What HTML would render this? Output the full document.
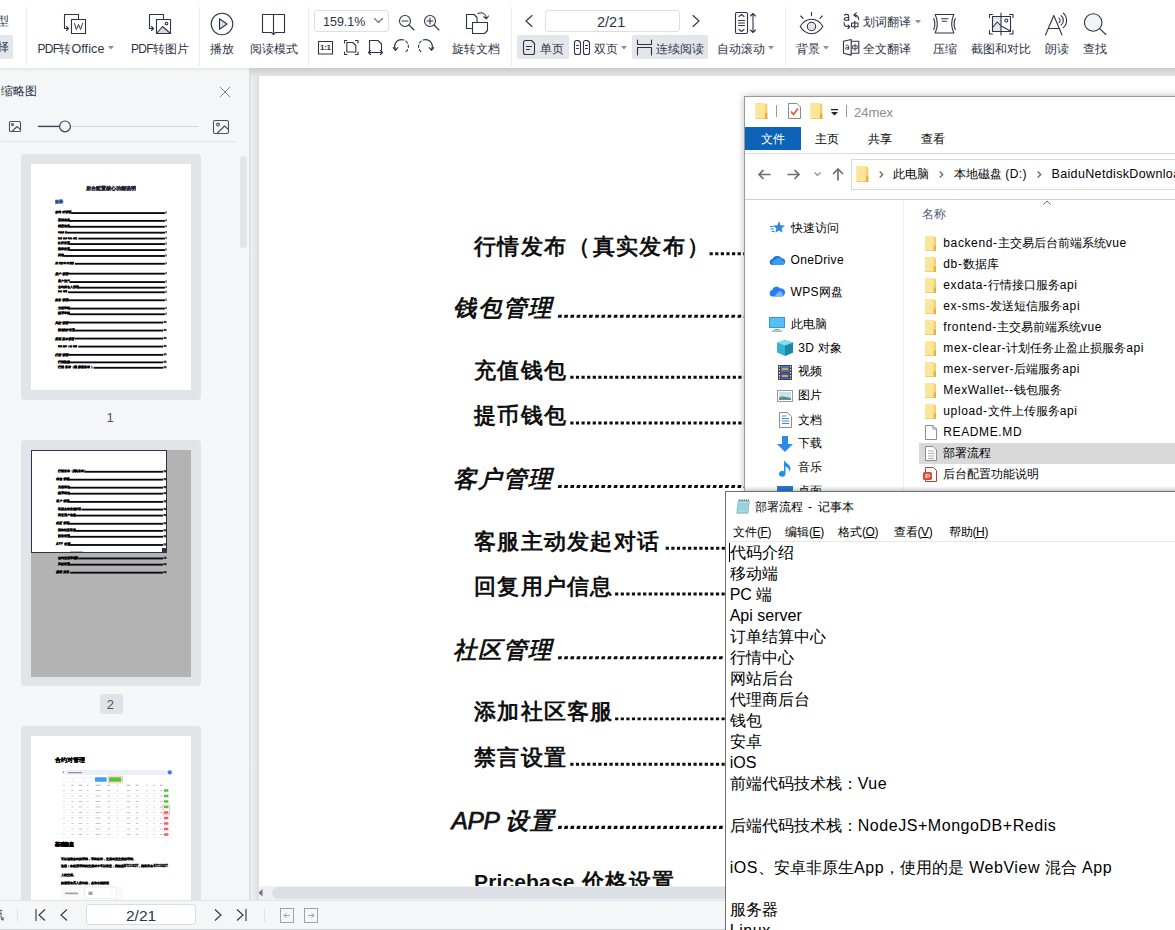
<!DOCTYPE html>
<html lang="zh">
<head>
<meta charset="utf-8">
<title>PDF</title>
<style>
*{box-sizing:border-box;margin:0;padding:0}
html,body{width:1175px;height:930px;overflow:hidden;background:#fff}
body{font-family:"Liberation Sans",sans-serif;color:#2d3446;position:relative}
.a{position:absolute}
.t{position:absolute;white-space:nowrap;line-height:1}
svg{position:absolute;overflow:visible}
#tb{left:0;top:0;width:1175px;height:68px;background:#fff}
#tbsh{left:0;top:68px;width:249px;height:4px;background:linear-gradient(#e4e6e9,#f5f6f8)}
#tbsh2{left:249px;top:68px;width:926px;height:8px;background:linear-gradient(#c9cbce,#e5e6e9)}
.lbl{font-size:12px;color:#2d3446}
.sep{position:absolute;width:1px;background:#ebecef;top:7px;height:59px}
.hl{position:absolute;background:#e3e6ea;border-radius:2px}
.ic{stroke:#2d3446;fill:none;stroke-width:1.1;stroke-linecap:round;stroke-linejoin:round}
#sb{left:0;top:68px;width:249px;height:832px;background:#f5f6f8}
#split{left:249px;top:76px;width:10px;height:824px;background:linear-gradient(90deg,#e0e2e6 0,#e0e2e6 20%,#eff0f3 21%,#e6e7ea 60%,#dbdcdf 100%)}
.card{position:absolute;left:21px;width:180px;background:#e1e4e9;border-radius:4px}
.pg{position:absolute;background:#fff}
.ln{position:absolute;height:1.6px;background:#15151f}
#doc{left:259px;top:76px;width:520px;height:811px;background:#fff}
.h1{font-size:23.5px;font-weight:bold;font-style:italic;color:#111;letter-spacing:2px}
.h1 b{font-size:24.5px;letter-spacing:-.3px;font-weight:normal;-webkit-text-stroke:.75px #111;margin-left:-1.5px;margin-right:-3.5px}
.h2 b{font-size:21px;letter-spacing:.15px}
.h2 u{text-decoration:none;margin:0 1.2px}
.h2{font-size:22.3px;font-weight:bold;color:#111;letter-spacing:1.3px}
.dots{position:absolute;height:3px}
#st{left:0;top:900px;width:1175px;height:30px;background:#f5f6f8;border-top:1px solid #e1e3e7}
#ex{left:744px;top:96px;width:440px;height:396px;background:#fff;border-left:1px solid #9a9a9a;border-top:1px solid #9a9a9a}
.ex{font-size:12px;color:#000}
.ex i,.np i{font-style:normal;letter-spacing:.35px}
#np{left:725px;top:491px;width:460px;height:450px;background:#fff;border-left:1px solid #6f6f6f;border-top:1px solid #6f6f6f}
.ex.f i{letter-spacing:.62px}
.np{font-size:16px;color:#000}
.np i{letter-spacing:0}
.np.w i{letter-spacing:.55px}
.u{text-decoration:underline}
</style>
</head>
<body>
<div id="doc" class="a"></div>
<div class="t h2" style="left:474px;top:236px;">行情发布<u>（</u>真实发布<u>）</u></div>
<div class="t h1" style="left:453px;top:297.4px;">钱包管理</div>
<div class="t h2" style="left:474px;top:359.6px;">充值钱包</div>
<div class="t h2" style="left:474px;top:405.4px;">提币钱包</div>
<div class="t h1" style="left:453px;top:467.8px;">客户管理</div>
<div class="t h2" style="left:474px;top:530.6px;">客服主动发起对话</div>
<div class="t h2" style="left:474px;top:576.4px;">回复用户信息</div>
<div class="t h1" style="left:453px;top:639px;">社区管理</div>
<div class="t h2" style="left:474px;top:701.2px;">添加社区客服</div>
<div class="t h2" style="left:474px;top:746.6px;">禁言设置</div>
<div class="t h1" style="left:453px;top:808.6px;"><b>APP</b> 设置</div>
<div class="t h2" style="left:474px;top:871.4px;"><b>Pricebase</b> 价格设置</div>
<svg style="left:0;top:0" width="760" height="900" viewBox="0 0 760 900"><path d="M709.6 253.7H760" stroke="#0c0c0c" stroke-width="2.9" stroke-dasharray="3.2 2.4" fill="none"/><path d="M558.1 316.2H760" stroke="#0c0c0c" stroke-width="3.1" stroke-dasharray="3.6 2.59" fill="none" transform="translate(67.2 0) skewX(-12)"/><path d="M570.3 377.2H760" stroke="#0c0c0c" stroke-width="2.9" stroke-dasharray="3.2 2.4" fill="none"/><path d="M570.3 423H760" stroke="#0c0c0c" stroke-width="2.9" stroke-dasharray="3.2 2.4" fill="none"/><path d="M558.1 486.5H760" stroke="#0c0c0c" stroke-width="3.1" stroke-dasharray="3.6 2.59" fill="none" transform="translate(103.4 0) skewX(-12)"/><path d="M665.7 548.2H760" stroke="#0c0c0c" stroke-width="2.9" stroke-dasharray="3.2 2.4" fill="none"/><path d="M615.1 594H760" stroke="#0c0c0c" stroke-width="2.9" stroke-dasharray="3.2 2.4" fill="none"/><path d="M558.1 657.7H760" stroke="#0c0c0c" stroke-width="3.1" stroke-dasharray="3.6 2.59" fill="none" transform="translate(139.8 0) skewX(-12)"/><path d="M615.1 718.9H760" stroke="#0c0c0c" stroke-width="2.9" stroke-dasharray="3.2 2.4" fill="none"/><path d="M570.3 764.2H760" stroke="#0c0c0c" stroke-width="2.9" stroke-dasharray="3.2 2.4" fill="none"/><path d="M558.1 827.4H760" stroke="#0c0c0c" stroke-width="3.1" stroke-dasharray="3.6 2.59" fill="none" transform="translate(175.9 0) skewX(-12)"/></svg>
<div class="a" style="left:249px;top:886px;width:930px;height:14px;background:#eef0f3"></div>
<div class="a" style="left:272px;top:887px;width:700px;height:12px;border-radius:6px;background:#dcdfe6"></div>
<svg style="left:258px;top:889px" width="5" height="8"><path d="M4.5 0v7.5L.5 3.75z" fill="#6b7385"/></svg>
<div id="sb" class="a"></div>
<div id="split" class="a"></div>
<div class="t lbl" style="left:1px;top:85px;font-size:12px">缩略图</div>
<svg style="left:220px;top:87px" width="10" height="10"><path d="M0 0l10 10M10 0L0 10" stroke="#7c8393" stroke-width="1" fill="none"/></svg>
<svg class="ic" style="left:9px;top:121px" width="12" height="11" viewBox="0 0 12 11"><rect x=".5" y=".5" width="11" height="10" rx="1" stroke="#4a5268"/><circle cx="3.5" cy="3.5" r="1" stroke="#4a5268"/><path d="M3 10.5l5-5 3.5 3" stroke="#4a5268"/></svg>
<div class="a" style="left:38px;top:126px;width:160px;height:1px;background:#d3d6dc"></div>
<svg style="left:0;top:118px" width="80" height="18"><path d="M38 8.4H59" stroke="#3a425a" stroke-width="1.4"/><circle cx="65" cy="8.4" r="5.4" fill="#f5f6f8" stroke="#3a425a" stroke-width="1.2"/></svg>
<svg class="ic" style="left:213px;top:120px" width="16" height="14" viewBox="0 0 16 14"><rect x=".5" y=".5" width="15" height="13" rx="1.5" stroke="#4a5268"/><circle cx="5" cy="4.5" r="1.4" stroke="#4a5268"/><path d="M4 13.5l7.5-7.5 4 3.5" stroke="#4a5268"/></svg>
<div class="a" style="left:1px;top:141px;width:236px;height:1px;background:#e1e3e8"></div>
<div class="a" style="left:240px;top:156px;width:7px;height:92px;border-radius:4px;background:#e1e4e9"></div>
<div class="card" style="top:154px;height:245.5px"></div>
<div class="pg" style="left:31px;top:164px;width:160px;height:226px"></div>
<div class="card" style="top:440px;height:245.5px"></div>
<div class="pg" style="left:31px;top:450px;width:160px;height:226.5px;background:#b3b3b3"></div>
<div class="a" style="left:30.5px;top:449.5px;width:136.5px;height:103.5px;background:#fff;border:1px solid #2d3446"></div>
<div class="a" style="left:162px;top:548px;width:5px;height:5px;background:#2d3446"></div>
<div class="card" style="top:726px;height:180px"></div>
<div class="pg" style="left:31px;top:736px;width:160px;height:170px"></div>
<svg style="left:0;top:0" width="249" height="900" viewBox="0 0 249 900"><rect x="71.1" y="212.15" width="93.8" height="1.85" fill="#08080f" /><rect x="165.4" y="211.4" width="1.3" height="2.2" fill="#14141e" opacity=".85"/><rect x="69.3" y="219.95" width="95.6" height="1.85" fill="#08080f" /><rect x="165.4" y="219.2" width="1.3" height="2.2" fill="#14141e" opacity=".85"/><rect x="69.3" y="225.85" width="95.6" height="1.85" fill="#08080f" /><rect x="165.4" y="225.1" width="1.3" height="2.2" fill="#14141e" opacity=".85"/><rect x="66.7" y="231.75" width="98.2" height="1.85" fill="#08080f" /><rect x="165.4" y="231" width="1.3" height="2.2" fill="#14141e" opacity=".85"/><rect x="78.3" y="237.65" width="86.6" height="1.85" fill="#08080f" /><rect x="165.4" y="236.9" width="1.3" height="2.2" fill="#14141e" opacity=".85"/><rect x="69.3" y="243.15" width="95.6" height="1.85" fill="#08080f" /><rect x="165.4" y="242.4" width="1.3" height="2.2" fill="#14141e" opacity=".85"/><rect x="69.3" y="249.15" width="95.6" height="1.85" fill="#08080f" /><rect x="165.4" y="248.4" width="1.3" height="2.2" fill="#14141e" opacity=".85"/><rect x="64.1" y="255.05" width="100.8" height="1.85" fill="#08080f" /><rect x="165.4" y="254.3" width="1.3" height="2.2" fill="#14141e" opacity=".85"/><rect x="74.8" y="262.85" width="90.1" height="1.85" fill="#08080f" /><rect x="165.4" y="262.1" width="1.3" height="2.2" fill="#14141e" opacity=".85"/><rect x="68.1" y="272.75" width="96.8" height="1.85" fill="#08080f" /><rect x="165.4" y="272" width="1.3" height="2.2" fill="#14141e" opacity=".85"/><rect x="69.3" y="281.15" width="95.6" height="1.85" fill="#08080f" /><rect x="165.4" y="280.4" width="1.3" height="2.2" fill="#14141e" opacity=".85"/><rect x="78.3" y="286.75" width="86.6" height="1.85" fill="#08080f" /><rect x="165.4" y="286" width="1.3" height="2.2" fill="#14141e" opacity=".85"/><rect x="68.1" y="291.35" width="96.8" height="1.85" fill="#08080f" /><rect x="165.4" y="290.6" width="1.3" height="2.2" fill="#14141e" opacity=".85"/><rect x="68.1" y="299.35" width="96.8" height="1.85" fill="#08080f" /><rect x="165.4" y="298.6" width="1.3" height="2.2" fill="#14141e" opacity=".85"/><rect x="69.3" y="307.65" width="95.6" height="1.85" fill="#08080f" /><rect x="165.4" y="306.9" width="1.3" height="2.2" fill="#14141e" opacity=".85"/><rect x="69.3" y="313.35" width="95.6" height="1.85" fill="#08080f" /><rect x="165.4" y="312.6" width="1.3" height="2.2" fill="#14141e" opacity=".85"/><rect x="68.1" y="321.65" width="94.9" height="1.85" fill="#08080f" /><rect x="163.5" y="320.9" width="3" height="2.2" fill="#14141e" opacity=".85"/><rect x="74.8" y="329.65" width="88.2" height="1.85" fill="#08080f" /><rect x="163.5" y="328.9" width="3" height="2.2" fill="#14141e" opacity=".85"/><rect x="74.8" y="337.65" width="88.2" height="1.85" fill="#08080f" /><rect x="163.5" y="336.9" width="3" height="2.2" fill="#14141e" opacity=".85"/><rect x="78.3" y="345.65" width="84.7" height="1.85" fill="#08080f" /><rect x="163.5" y="344.9" width="3" height="2.2" fill="#14141e" opacity=".85"/><rect x="68.1" y="353.95" width="94.9" height="1.85" fill="#08080f" /><rect x="163.5" y="353.2" width="3" height="2.2" fill="#14141e" opacity=".85"/><rect x="69.3" y="361.45" width="93.7" height="1.85" fill="#08080f" /><rect x="163.5" y="360.7" width="3" height="2.2" fill="#14141e" opacity=".85"/><rect x="93.6" y="366.85" width="69.4" height="1.85" fill="#08080f" /><rect x="163.5" y="366.1" width="3" height="2.2" fill="#14141e" opacity=".85"/><rect x="84.9" y="470.85" width="78.1" height="1.85" fill="#08080f" /><rect x="163.5" y="470.1" width="3" height="2.2" fill="#14141e" opacity=".85"/><rect x="68.2" y="478.75" width="94.8" height="1.85" fill="#08080f" /><rect x="163.5" y="478" width="3" height="2.2" fill="#14141e" opacity=".85"/><rect x="69.5" y="486.75" width="93.5" height="1.85" fill="#08080f" /><rect x="163.5" y="486" width="3" height="2.2" fill="#14141e" opacity=".85"/><rect x="69.5" y="492.75" width="93.5" height="1.85" fill="#08080f" /><rect x="163.5" y="492" width="3" height="2.2" fill="#14141e" opacity=".85"/><rect x="68.2" y="500.95" width="94.8" height="1.85" fill="#08080f" /><rect x="163.5" y="500.2" width="3" height="2.2" fill="#14141e" opacity=".85"/><rect x="81.5" y="508.65" width="81.5" height="1.85" fill="#08080f" /><rect x="163.5" y="507.9" width="3" height="2.2" fill="#14141e" opacity=".85"/><rect x="75.6" y="514.65" width="87.4" height="1.85" fill="#08080f" /><rect x="163.5" y="513.9" width="3" height="2.2" fill="#14141e" opacity=".85"/><rect x="68.2" y="522.85" width="94.8" height="1.85" fill="#08080f" /><rect x="163.5" y="522.1" width="3" height="2.2" fill="#14141e" opacity=".85"/><rect x="75.6" y="529.95" width="87.4" height="1.85" fill="#08080f" /><rect x="163.5" y="529.2" width="3" height="2.2" fill="#14141e" opacity=".85"/><rect x="69.5" y="535.85" width="93.5" height="1.85" fill="#08080f" /><rect x="163.5" y="535.1" width="3" height="2.2" fill="#14141e" opacity=".85"/><rect x="68.4" y="544.05" width="94.6" height="1.85" fill="#08080f" /><rect x="163.5" y="543.3" width="3" height="2.2" fill="#14141e" opacity=".85"/><rect x="78.3" y="557.55" width="84.7" height="1.85" fill="#08080f" /><rect x="163.5" y="556.8" width="3" height="2.2" fill="#14141e" opacity=".85"/><rect x="69.4" y="563.75" width="93.6" height="1.85" fill="#08080f" /><rect x="163.5" y="563" width="3" height="2.2" fill="#14141e" opacity=".85"/><rect x="70.1" y="571.75" width="92.9" height="1.85" fill="#08080f" /><rect x="163.5" y="571" width="3" height="2.2" fill="#14141e" opacity=".85"/><rect x="70" y="551" width="13" height="0.9" fill="#777" opacity=".6"/><rect x="66" y="770" width="106.8" height="5" fill="#eceefa" /><rect x="62.7" y="771.5" width="1.6" height="1.6" fill="#888" /><rect x="68" y="772" width="14" height="1.2" fill="#666" opacity=".7"/><circle cx="169.8" cy="772.3" r="2.1" fill="#3b78f2"/><rect x="62.5" y="777.2" width="10.1" height="4.8" fill="#fff" stroke="#e4e5ea" stroke-width=".4"/><rect x="73.5" y="777.2" width="9.7" height="4.8" fill="#fff" stroke="#e4e5ea" stroke-width=".4"/><rect x="84" y="777.2" width="9.9" height="4.8" fill="#fff" stroke="#e4e5ea" stroke-width=".4"/><rect x="95" y="777.2" width="11.6" height="4.6" fill="#3e9ff5" rx=".6"/><rect x="109" y="777.2" width="12.4" height="4.6" fill="#5bc23a" rx=".6"/><rect x="108.1" y="776.2" width="14.5" height="6.7" fill="none" stroke="#f19a8a" stroke-width=".6" rx=".8"/><rect x="63.4" y="784.7" width="1" height="1" fill="#777" opacity=".6"/><rect x="71.3" y="784.7" width="2.2" height="1" fill="#777" opacity=".6"/><rect x="78.8" y="784.7" width="3.5" height="1" fill="#777" opacity=".6"/><rect x="87.1" y="784.7" width="1.4" height="1" fill="#777" opacity=".6"/><rect x="95.6" y="784.7" width="5" height="1" fill="#777" opacity=".6"/><rect x="107.5" y="784.7" width="2.5" height="1" fill="#777" opacity=".6"/><rect x="116.9" y="784.7" width="1" height="1" fill="#777" opacity=".6"/><rect x="126.7" y="784.7" width="3.5" height="1" fill="#777" opacity=".6"/><rect x="135.6" y="784.7" width="2.5" height="1" fill="#777" opacity=".6"/><rect x="146.2" y="784.7" width="1.2" height="1" fill="#777" opacity=".6"/><rect x="153.3" y="784.7" width="1.4" height="1" fill="#777" opacity=".6"/><rect x="160" y="784.7" width="2.6" height="1" fill="#777" opacity=".6"/><rect x="62.5" y="793.2" width="110" height="0.35" fill="#e4e5ea" /><rect x="63.4" y="790" width="1" height="1" fill="#9a9ca8" opacity=".6"/><rect x="71.3" y="790" width="2.2" height="1" fill="#9a9ca8" opacity=".6"/><rect x="78.8" y="790" width="3.5" height="1" fill="#9a9ca8" opacity=".6"/><rect x="87.1" y="790" width="1.4" height="1" fill="#9a9ca8" opacity=".6"/><rect x="95.6" y="790" width="5" height="1" fill="#9a9ca8" opacity=".6"/><rect x="107.5" y="790" width="2.5" height="1" fill="#9a9ca8" opacity=".6"/><rect x="116.9" y="790" width="1" height="1" fill="#9a9ca8" opacity=".6"/><rect x="126.7" y="790" width="3.5" height="1" fill="#9a9ca8" opacity=".6"/><rect x="135.6" y="790" width="2.5" height="1" fill="#9a9ca8" opacity=".6"/><rect x="146.2" y="790" width="1.2" height="1" fill="#9a9ca8" opacity=".6"/><rect x="153.3" y="790" width="1.4" height="1" fill="#9a9ca8" opacity=".6"/><rect x="160" y="790" width="2.6" height="1" fill="#9a9ca8" opacity=".6"/><rect x="164" y="789.2" width="4.4" height="2.6" fill="#58c038" rx=".4"/><rect x="62.5" y="798.7" width="110" height="0.35" fill="#e4e5ea" /><rect x="63.4" y="795.5" width="1" height="1" fill="#9a9ca8" opacity=".6"/><rect x="71.3" y="795.5" width="2.2" height="1" fill="#9a9ca8" opacity=".6"/><rect x="78.8" y="795.5" width="3.5" height="1" fill="#9a9ca8" opacity=".6"/><rect x="87.1" y="795.5" width="1.4" height="1" fill="#9a9ca8" opacity=".6"/><rect x="95.6" y="795.5" width="5" height="1" fill="#9a9ca8" opacity=".6"/><rect x="107.5" y="795.5" width="2.5" height="1" fill="#9a9ca8" opacity=".6"/><rect x="116.9" y="795.5" width="1" height="1" fill="#9a9ca8" opacity=".6"/><rect x="126.7" y="795.5" width="3.5" height="1" fill="#9a9ca8" opacity=".6"/><rect x="135.6" y="795.5" width="2.5" height="1" fill="#9a9ca8" opacity=".6"/><rect x="146.2" y="795.5" width="1.2" height="1" fill="#9a9ca8" opacity=".6"/><rect x="153.3" y="795.5" width="1.4" height="1" fill="#9a9ca8" opacity=".6"/><rect x="160" y="795.5" width="2.6" height="1" fill="#9a9ca8" opacity=".6"/><rect x="164" y="794.7" width="4.4" height="2.6" fill="#58c038" rx=".4"/><rect x="62.5" y="804.2" width="110" height="0.35" fill="#e4e5ea" /><rect x="63.4" y="801" width="1" height="1" fill="#9a9ca8" opacity=".6"/><rect x="71.3" y="801" width="2.2" height="1" fill="#9a9ca8" opacity=".6"/><rect x="78.8" y="801" width="3.5" height="1" fill="#9a9ca8" opacity=".6"/><rect x="87.1" y="801" width="1.4" height="1" fill="#9a9ca8" opacity=".6"/><rect x="95.6" y="801" width="5" height="1" fill="#9a9ca8" opacity=".6"/><rect x="107.5" y="801" width="2.5" height="1" fill="#9a9ca8" opacity=".6"/><rect x="116.9" y="801" width="1" height="1" fill="#9a9ca8" opacity=".6"/><rect x="126.7" y="801" width="3.5" height="1" fill="#9a9ca8" opacity=".6"/><rect x="135.6" y="801" width="2.5" height="1" fill="#9a9ca8" opacity=".6"/><rect x="146.2" y="801" width="1.2" height="1" fill="#9a9ca8" opacity=".6"/><rect x="153.3" y="801" width="1.4" height="1" fill="#9a9ca8" opacity=".6"/><rect x="160" y="801" width="2.6" height="1" fill="#9a9ca8" opacity=".6"/><rect x="164" y="800.2" width="4.4" height="2.6" fill="#58c038" rx=".4"/><rect x="62.5" y="809.7" width="110" height="0.35" fill="#e4e5ea" /><rect x="63.4" y="806.5" width="1" height="1" fill="#9a9ca8" opacity=".6"/><rect x="71.3" y="806.5" width="2.2" height="1" fill="#9a9ca8" opacity=".6"/><rect x="78.8" y="806.5" width="3.5" height="1" fill="#9a9ca8" opacity=".6"/><rect x="87.1" y="806.5" width="1.4" height="1" fill="#9a9ca8" opacity=".6"/><rect x="95.6" y="806.5" width="5" height="1" fill="#9a9ca8" opacity=".6"/><rect x="107.5" y="806.5" width="2.5" height="1" fill="#9a9ca8" opacity=".6"/><rect x="116.9" y="806.5" width="1" height="1" fill="#9a9ca8" opacity=".6"/><rect x="126.7" y="806.5" width="3.5" height="1" fill="#9a9ca8" opacity=".6"/><rect x="135.6" y="806.5" width="2.5" height="1" fill="#9a9ca8" opacity=".6"/><rect x="146.2" y="806.5" width="1.2" height="1" fill="#9a9ca8" opacity=".6"/><rect x="153.3" y="806.5" width="1.4" height="1" fill="#9a9ca8" opacity=".6"/><rect x="160" y="806.5" width="2.6" height="1" fill="#9a9ca8" opacity=".6"/><rect x="164" y="805.7" width="4.4" height="2.6" fill="#58c038" rx=".4"/><rect x="62.5" y="815.2" width="110" height="0.35" fill="#e4e5ea" /><rect x="63.4" y="812" width="1" height="1" fill="#9a9ca8" opacity=".6"/><rect x="71.3" y="812" width="2.2" height="1" fill="#9a9ca8" opacity=".6"/><rect x="78.8" y="812" width="3.5" height="1" fill="#9a9ca8" opacity=".6"/><rect x="87.1" y="812" width="1.4" height="1" fill="#9a9ca8" opacity=".6"/><rect x="95.6" y="812" width="5" height="1" fill="#9a9ca8" opacity=".6"/><rect x="107.5" y="812" width="2.5" height="1" fill="#9a9ca8" opacity=".6"/><rect x="116.9" y="812" width="1" height="1" fill="#9a9ca8" opacity=".6"/><rect x="126.7" y="812" width="3.5" height="1" fill="#9a9ca8" opacity=".6"/><rect x="135.6" y="812" width="2.5" height="1" fill="#9a9ca8" opacity=".6"/><rect x="146.2" y="812" width="1.2" height="1" fill="#9a9ca8" opacity=".6"/><rect x="153.3" y="812" width="1.4" height="1" fill="#9a9ca8" opacity=".6"/><rect x="160" y="812" width="2.6" height="1" fill="#9a9ca8" opacity=".6"/><rect x="164" y="811.2" width="4.4" height="2.6" fill="#f35b5b" rx=".4"/><rect x="62.5" y="820.7" width="110" height="0.35" fill="#e4e5ea" /><rect x="63.4" y="817.5" width="1" height="1" fill="#9a9ca8" opacity=".6"/><rect x="71.3" y="817.5" width="2.2" height="1" fill="#9a9ca8" opacity=".6"/><rect x="78.8" y="817.5" width="3.5" height="1" fill="#9a9ca8" opacity=".6"/><rect x="87.1" y="817.5" width="1.4" height="1" fill="#9a9ca8" opacity=".6"/><rect x="95.6" y="817.5" width="5" height="1" fill="#9a9ca8" opacity=".6"/><rect x="107.5" y="817.5" width="2.5" height="1" fill="#9a9ca8" opacity=".6"/><rect x="116.9" y="817.5" width="1" height="1" fill="#9a9ca8" opacity=".6"/><rect x="126.7" y="817.5" width="3.5" height="1" fill="#9a9ca8" opacity=".6"/><rect x="135.6" y="817.5" width="2.5" height="1" fill="#9a9ca8" opacity=".6"/><rect x="146.2" y="817.5" width="1.2" height="1" fill="#9a9ca8" opacity=".6"/><rect x="153.3" y="817.5" width="1.4" height="1" fill="#9a9ca8" opacity=".6"/><rect x="160" y="817.5" width="2.6" height="1" fill="#9a9ca8" opacity=".6"/><rect x="164" y="816.7" width="4.4" height="2.6" fill="#f35b5b" rx=".4"/><rect x="62.5" y="826.2" width="110" height="0.35" fill="#e4e5ea" /><rect x="63.4" y="823" width="1" height="1" fill="#9a9ca8" opacity=".6"/><rect x="71.3" y="823" width="2.2" height="1" fill="#9a9ca8" opacity=".6"/><rect x="78.8" y="823" width="3.5" height="1" fill="#9a9ca8" opacity=".6"/><rect x="87.1" y="823" width="1.4" height="1" fill="#9a9ca8" opacity=".6"/><rect x="95.6" y="823" width="5" height="1" fill="#9a9ca8" opacity=".6"/><rect x="107.5" y="823" width="2.5" height="1" fill="#9a9ca8" opacity=".6"/><rect x="116.9" y="823" width="1" height="1" fill="#9a9ca8" opacity=".6"/><rect x="126.7" y="823" width="3.5" height="1" fill="#9a9ca8" opacity=".6"/><rect x="135.6" y="823" width="2.5" height="1" fill="#9a9ca8" opacity=".6"/><rect x="146.2" y="823" width="1.2" height="1" fill="#9a9ca8" opacity=".6"/><rect x="153.3" y="823" width="1.4" height="1" fill="#9a9ca8" opacity=".6"/><rect x="160" y="823" width="2.6" height="1" fill="#9a9ca8" opacity=".6"/><rect x="164" y="822.2" width="4.4" height="2.6" fill="#f35b5b" rx=".4"/><rect x="62.5" y="831.7" width="110" height="0.35" fill="#e4e5ea" /><rect x="63.4" y="828.5" width="1" height="1" fill="#9a9ca8" opacity=".6"/><rect x="71.3" y="828.5" width="2.2" height="1" fill="#9a9ca8" opacity=".6"/><rect x="78.8" y="828.5" width="3.5" height="1" fill="#9a9ca8" opacity=".6"/><rect x="87.1" y="828.5" width="1.4" height="1" fill="#9a9ca8" opacity=".6"/><rect x="95.6" y="828.5" width="5" height="1" fill="#9a9ca8" opacity=".6"/><rect x="107.5" y="828.5" width="2.5" height="1" fill="#9a9ca8" opacity=".6"/><rect x="116.9" y="828.5" width="1" height="1" fill="#9a9ca8" opacity=".6"/><rect x="126.7" y="828.5" width="3.5" height="1" fill="#9a9ca8" opacity=".6"/><rect x="135.6" y="828.5" width="2.5" height="1" fill="#9a9ca8" opacity=".6"/><rect x="146.2" y="828.5" width="1.2" height="1" fill="#9a9ca8" opacity=".6"/><rect x="153.3" y="828.5" width="1.4" height="1" fill="#9a9ca8" opacity=".6"/><rect x="160" y="828.5" width="2.6" height="1" fill="#9a9ca8" opacity=".6"/><rect x="164" y="827.7" width="4.4" height="2.6" fill="#f35b5b" rx=".4"/><rect x="62.5" y="837.2" width="110" height="0.35" fill="#e4e5ea" /><rect x="63.4" y="834" width="1" height="1" fill="#9a9ca8" opacity=".6"/><rect x="71.3" y="834" width="2.2" height="1" fill="#9a9ca8" opacity=".6"/><rect x="78.8" y="834" width="3.5" height="1" fill="#9a9ca8" opacity=".6"/><rect x="87.1" y="834" width="1.4" height="1" fill="#9a9ca8" opacity=".6"/><rect x="95.6" y="834" width="5" height="1" fill="#9a9ca8" opacity=".6"/><rect x="107.5" y="834" width="2.5" height="1" fill="#9a9ca8" opacity=".6"/><rect x="116.9" y="834" width="1" height="1" fill="#9a9ca8" opacity=".6"/><rect x="126.7" y="834" width="3.5" height="1" fill="#9a9ca8" opacity=".6"/><rect x="135.6" y="834" width="2.5" height="1" fill="#9a9ca8" opacity=".6"/><rect x="146.2" y="834" width="1.2" height="1" fill="#9a9ca8" opacity=".6"/><rect x="153.3" y="834" width="1.4" height="1" fill="#9a9ca8" opacity=".6"/><rect x="160" y="834" width="2.6" height="1" fill="#9a9ca8" opacity=".6"/><rect x="164" y="833.2" width="4.4" height="2.6" fill="#f35b5b" rx=".4"/><rect x="163" y="805" width="6.6" height="9.8" fill="none" stroke="#f19a8a" stroke-width=".6"/><rect x="61" y="885.8" width="62" height="15" fill="#fafafb" /><rect x="65" y="892.6" width="13" height="1.6" fill="#777" opacity=".7"/><rect x="84.6" y="887.2" width="31.8" height="11" fill="#fff" stroke="#dcdde3" stroke-width=".5" rx=".8"/><rect x="88.5" y="891.6" width="4" height="3.4" fill="#888" opacity=".8"/><path d="M111 892.6l1 1 1-1" stroke="#bbb" stroke-width=".5" fill="none"/></svg>
<div class="t lbl" style="left:85.7px;top:185.7px;transform-origin:0 0;transform:scale(.25);font-weight:bold;color:#000;-webkit-text-stroke:1.5px #000;font-size:19.6px;color:#1c1c30;-webkit-text-stroke:1px #1c1c30">后台配置核心功能说明</div>
<div class="t lbl" style="left:55.3px;top:200px;transform-origin:0 0;transform:scale(.25);font-weight:bold;color:#000;-webkit-text-stroke:1.5px #000;font-size:15.5px;color:#2a4a9a;-webkit-text-stroke:2px #2a4a9a">目录</div>
<div class="t lbl" style="left:54.8px;top:756.8px;transform-origin:0 0;transform:scale(.25);font-weight:bold;color:#000;-webkit-text-stroke:1.5px #000;font-size:24.2px;-webkit-text-stroke:.8px #000">合约对管理</div>
<div class="t lbl" style="left:54.8px;top:841.8px;transform-origin:0 0;transform:scale(.25);font-weight:bold;color:#000;-webkit-text-stroke:1.5px #000;font-size:18.2px;-webkit-text-stroke:2.5px #000">基础信息</div>
<div class="t lbl" style="left:58.2px;top:469.9px;transform-origin:0 0;transform:scale(.25);font-weight:bold;color:#000;-webkit-text-stroke:1.5px #000;font-size:11.3px;letter-spacing:.66px;-webkit-text-stroke:1.3px #000">行情发布（真实发布）</div>
<div class="t lbl" style="left:55.5px;top:477.8px;transform-origin:0 0;transform:scale(.25);font-weight:bold;color:#000;-webkit-text-stroke:1.5px #000;font-size:11.9px;font-style:italic;letter-spacing:1px;-webkit-text-stroke:1.3px #000">钱包管理</div>
<div class="t lbl" style="left:58.2px;top:485.8px;transform-origin:0 0;transform:scale(.25);font-weight:bold;color:#000;-webkit-text-stroke:1.5px #000;font-size:11.3px;letter-spacing:.66px;-webkit-text-stroke:1.3px #000">充值钱包</div>
<div class="t lbl" style="left:58.2px;top:491.8px;transform-origin:0 0;transform:scale(.25);font-weight:bold;color:#000;-webkit-text-stroke:1.5px #000;font-size:11.3px;letter-spacing:.66px;-webkit-text-stroke:1.3px #000">提币钱包</div>
<div class="t lbl" style="left:55.5px;top:500px;transform-origin:0 0;transform:scale(.25);font-weight:bold;color:#000;-webkit-text-stroke:1.5px #000;font-size:11.9px;font-style:italic;letter-spacing:1px;-webkit-text-stroke:1.3px #000">客户管理</div>
<div class="t lbl" style="left:58.2px;top:507.7px;transform-origin:0 0;transform:scale(.25);font-weight:bold;color:#000;-webkit-text-stroke:1.5px #000;font-size:11.3px;letter-spacing:.66px;-webkit-text-stroke:1.3px #000">客服主动发起对话</div>
<div class="t lbl" style="left:58.2px;top:513.7px;transform-origin:0 0;transform:scale(.25);font-weight:bold;color:#000;-webkit-text-stroke:1.5px #000;font-size:11.3px;letter-spacing:.66px;-webkit-text-stroke:1.3px #000">回复用户信息</div>
<div class="t lbl" style="left:55.5px;top:521.9px;transform-origin:0 0;transform:scale(.25);font-weight:bold;color:#000;-webkit-text-stroke:1.5px #000;font-size:11.9px;font-style:italic;letter-spacing:1px;-webkit-text-stroke:1.3px #000">社区管理</div>
<div class="t lbl" style="left:58.2px;top:529px;transform-origin:0 0;transform:scale(.25);font-weight:bold;color:#000;-webkit-text-stroke:1.5px #000;font-size:11.3px;letter-spacing:.66px;-webkit-text-stroke:1.3px #000">添加社区客服</div>
<div class="t lbl" style="left:58.2px;top:534.9px;transform-origin:0 0;transform:scale(.25);font-weight:bold;color:#000;-webkit-text-stroke:1.5px #000;font-size:11.3px;letter-spacing:.66px;-webkit-text-stroke:1.3px #000">禁言设置</div>
<div class="t lbl" style="left:55.5px;top:543.1px;transform-origin:0 0;transform:scale(.25);font-weight:bold;color:#000;-webkit-text-stroke:1.5px #000;font-size:11.9px;font-style:italic;letter-spacing:1px;-webkit-text-stroke:1.3px #000">APP 设置</div>
<div class="t lbl" style="left:58.2px;top:556.6px;transform-origin:0 0;transform:scale(.25);font-weight:bold;color:#000;-webkit-text-stroke:1.5px #000;font-size:11.3px;letter-spacing:.66px;-webkit-text-stroke:1.3px #000">合约交易手续费</div>
<div class="t lbl" style="left:58.2px;top:562.8px;transform-origin:0 0;transform:scale(.25);font-weight:bold;color:#000;-webkit-text-stroke:1.5px #000;font-size:11.3px;letter-spacing:.66px;-webkit-text-stroke:1.3px #000">风控设置</div>
<div class="t lbl" style="left:55.5px;top:570.8px;transform-origin:0 0;transform:scale(.25);font-weight:bold;color:#000;-webkit-text-stroke:1.5px #000;font-size:11.9px;font-style:italic;letter-spacing:1px;-webkit-text-stroke:1.3px #000">新闻资讯</div>
<div class="t lbl" style="left:55.3px;top:211.2px;transform-origin:0 0;transform:scale(.25);font-weight:bold;color:#000;-webkit-text-stroke:1.5px #000;font-style:italic;font-size:11.8px;letter-spacing:1.03px;-webkit-text-stroke:1.3px #000">合约对管理</div>
<div class="t lbl" style="left:58.2px;top:219px;transform-origin:0 0;transform:scale(.25);font-weight:bold;color:#000;-webkit-text-stroke:1.5px #000;font-size:10.5px;letter-spacing:0.91px;-webkit-text-stroke:1.3px #000">基础信息</div>
<div class="t lbl" style="left:58.2px;top:224.9px;transform-origin:0 0;transform:scale(.25);font-weight:bold;color:#000;-webkit-text-stroke:1.5px #000;font-size:10.5px;letter-spacing:0.91px;-webkit-text-stroke:1.3px #000">精度信息</div>
<div class="t lbl" style="left:58.2px;top:230.8px;transform-origin:0 0;transform:scale(.25);font-weight:bold;color:#000;-webkit-text-stroke:1.5px #000;font-size:8.1px;letter-spacing:0.7px;-webkit-text-stroke:1.3px #000">风控信息</div>
<div class="t lbl" style="left:58.2px;top:236.7px;transform-origin:0 0;transform:scale(.25);font-weight:bold;color:#000;-webkit-text-stroke:1.5px #000;font-size:9.4px;letter-spacing:0.82px;-webkit-text-stroke:1.3px #000">交易及保证金信息</div>
<div class="t lbl" style="left:58.2px;top:242.2px;transform-origin:0 0;transform:scale(.25);font-weight:bold;color:#000;-webkit-text-stroke:1.5px #000;font-size:10.5px;letter-spacing:0.91px;-webkit-text-stroke:1.3px #000">杠杆设置</div>
<div class="t lbl" style="left:58.2px;top:248.2px;transform-origin:0 0;transform:scale(.25);font-weight:bold;color:#000;-webkit-text-stroke:1.5px #000;font-size:10.5px;letter-spacing:0.91px;-webkit-text-stroke:1.3px #000">费率设置</div>
<div class="t lbl" style="left:58.2px;top:254.1px;transform-origin:0 0;transform:scale(.25);font-weight:bold;color:#000;-webkit-text-stroke:1.5px #000;font-size:11.4px;letter-spacing:0.99px;-webkit-text-stroke:1.3px #000">其他</div>
<div class="t lbl" style="left:55.3px;top:261.9px;transform-origin:0 0;transform:scale(.25);font-weight:bold;color:#000;-webkit-text-stroke:1.5px #000;font-style:italic;font-size:10.4px;letter-spacing:0.91px;-webkit-text-stroke:1.3px #000">用户查询与管理</div>
<div class="t lbl" style="left:55.3px;top:271.8px;transform-origin:0 0;transform:scale(.25);font-weight:bold;color:#000;-webkit-text-stroke:1.5px #000;font-style:italic;font-size:12.1px;letter-spacing:1.05px;-webkit-text-stroke:1.3px #000">用户管理</div>
<div class="t lbl" style="left:58.2px;top:280.2px;transform-origin:0 0;transform:scale(.25);font-weight:bold;color:#000;-webkit-text-stroke:1.5px #000;font-size:10.5px;letter-spacing:0.91px;-webkit-text-stroke:1.3px #000">用户资产</div>
<div class="t lbl" style="left:58.2px;top:285.8px;transform-origin:0 0;transform:scale(.25);font-weight:bold;color:#000;-webkit-text-stroke:1.5px #000;font-size:10.7px;letter-spacing:0.93px;-webkit-text-stroke:1.3px #000">合约持仓人管理</div>
<div class="t lbl" style="left:58.2px;top:290.4px;transform-origin:0 0;transform:scale(.25);font-weight:bold;color:#000;-webkit-text-stroke:1.5px #000;font-size:9.4px;letter-spacing:0.82px;-webkit-text-stroke:1.3px #000">实名管理</div>
<div class="t lbl" style="left:55.3px;top:298.4px;transform-origin:0 0;transform:scale(.25);font-weight:bold;color:#000;-webkit-text-stroke:1.5px #000;font-style:italic;font-size:12.1px;letter-spacing:1.05px;-webkit-text-stroke:1.3px #000">财务管理</div>
<div class="t lbl" style="left:58.2px;top:306.7px;transform-origin:0 0;transform:scale(.25);font-weight:bold;color:#000;-webkit-text-stroke:1.5px #000;font-size:10.5px;letter-spacing:0.91px;-webkit-text-stroke:1.3px #000">充值审核</div>
<div class="t lbl" style="left:58.2px;top:312.4px;transform-origin:0 0;transform:scale(.25);font-weight:bold;color:#000;-webkit-text-stroke:1.5px #000;font-size:10.5px;letter-spacing:0.91px;-webkit-text-stroke:1.3px #000">提币审核</div>
<div class="t lbl" style="left:55.3px;top:320.7px;transform-origin:0 0;transform:scale(.25);font-weight:bold;color:#000;-webkit-text-stroke:1.5px #000;font-style:italic;font-size:12.1px;letter-spacing:1.05px;-webkit-text-stroke:1.3px #000">风控管理</div>
<div class="t lbl" style="left:58.2px;top:328.7px;transform-origin:0 0;transform:scale(.25);font-weight:bold;color:#000;-webkit-text-stroke:1.5px #000;font-size:10.4px;letter-spacing:0.9px;-webkit-text-stroke:1.3px #000">限价保护设置</div>
<div class="t lbl" style="left:55.3px;top:336.7px;transform-origin:0 0;transform:scale(.25);font-weight:bold;color:#000;-webkit-text-stroke:1.5px #000;font-style:italic;font-size:12.1px;letter-spacing:1.06px;-webkit-text-stroke:1.3px #000">应用版本管理</div>
<div class="t lbl" style="left:58.2px;top:344.7px;transform-origin:0 0;transform:scale(.25);font-weight:bold;color:#000;-webkit-text-stroke:1.5px #000;font-size:9.4px;letter-spacing:0.82px;-webkit-text-stroke:1.3px #000">应用版本人脸设置</div>
<div class="t lbl" style="left:55.3px;top:353px;transform-origin:0 0;transform:scale(.25);font-weight:bold;color:#000;-webkit-text-stroke:1.5px #000;font-style:italic;font-size:12.1px;letter-spacing:1.05px;-webkit-text-stroke:1.3px #000">行情管理</div>
<div class="t lbl" style="left:58.2px;top:360.5px;transform-origin:0 0;transform:scale(.25);font-weight:bold;color:#000;-webkit-text-stroke:1.5px #000;font-size:10.5px;letter-spacing:0.91px;-webkit-text-stroke:1.3px #000">行情数据</div>
<div class="t lbl" style="left:58.2px;top:365.9px;transform-origin:0 0;transform:scale(.25);font-weight:bold;color:#000;-webkit-text-stroke:1.5px #000;font-size:11.9px;letter-spacing:1.04px;-webkit-text-stroke:1.3px #000">行情发布（模拟假发布）</div>
<div class="t lbl" style="left:61px;top:856.6px;transform-origin:0 0;transform:scale(.25);font-weight:bold;color:#000;-webkit-text-stroke:1.5px #000;font-size:12.1px;-webkit-text-stroke:1.2px #000">可以创建合约的币种，币种条件，交易对是交易的币种。</div>
<div class="t lbl" style="left:61px;top:864.4px;transform-origin:0 0;transform:scale(.25);font-weight:bold;color:#000;-webkit-text-stroke:1.5px #000;font-size:12.1px;-webkit-text-stroke:1.2px #000">注意：在使用币种的交易对中可以设定，例如是BTCUSDT，则表示在BTCUSDT</div>
<div class="t lbl" style="left:61px;top:872.9px;transform-origin:0 0;transform:scale(.25);font-weight:bold;color:#000;-webkit-text-stroke:1.5px #000;font-size:12.1px;-webkit-text-stroke:1.2px #000">上的交易。</div>
<div class="t lbl" style="left:61px;top:881.4px;transform-origin:0 0;transform:scale(.25);font-weight:bold;color:#000;-webkit-text-stroke:1.5px #000;font-size:12.1px;-webkit-text-stroke:1.2px #000">如需要在买入卖出的，点击右侧按钮</div>
<div class="t lbl" style="left:106.5px;top:411px;font-size:13px;color:#4a5268">1</div>
<div class="a" style="left:99.5px;top:694px;width:23px;height:19.5px;border-radius:3px;background:#dfe3e8"></div>
<div class="t lbl" style="left:106.8px;top:697.5px;font-size:13px;color:#4a5268">2</div>
<div id="tb" class="a"></div>
<div id="tbsh" class="a"></div>
<div id="tbsh2" class="a"></div>
<div class="hl" style="left:-4px;top:35px;width:17px;height:24px"></div>
<div class="t lbl" style="left:-3px;top:15px;">型</div>
<div class="t lbl" style="left:-3px;top:41px;">择</div>
<div class="sep" style="left:26px"></div>
<div class="sep" style="left:199px"></div>
<div class="sep" style="left:308px"></div>
<div class="sep" style="left:511px"></div>
<div class="sep" style="left:785px"></div>
<svg class="ic" style="left:63px;top:13px" width="24" height="22" viewBox="0 0 24 22"><path d="M15.5 5.5V1.5H1.5V15.5H5.5M3.5 13.5l2 2-2 2"/><rect x="8.5" y="6.5" width="14" height="14"/><path d="M11.5 10.5l1.9 6 2.1-5 2.1 5 1.9-6" stroke-width="1"/></svg>
<div class="t lbl" style="left:37.5px;top:42.7px;"><span style="letter-spacing:-.7px">PDF</span>转<span style="font-size:12.5px;letter-spacing:.1px">Office</span></div>
<svg style="left:108px;top:46px" width="6" height="4"><path d="M0 0h6L3 3.5z" fill="#8a8f9c"/></svg>
<svg class="ic" style="left:148px;top:13px" width="24" height="22" viewBox="0 0 24 22"><path d="M15.5 5.5V1.5H1.5V15.5H5.5M3.5 13.5l2 2-2 2"/><rect x="8.5" y="6.5" width="14" height="14"/><circle cx="18.5" cy="10.5" r="1.3"/><path d="M8.5 20.5l6-7 8 7z" fill="#d8dadf"/></svg>
<div class="t lbl" style="left:131px;top:42.7px;"><span style="letter-spacing:-.7px">PDF</span>转图片</div>
<svg class="ic" style="left:210.1px;top:11.7px" width="24" height="24" viewBox="0 0 24 24"><circle cx="12" cy="12" r="10.8"/><path d="M9.5 6.8l7.5 5.2-7.5 5.2z" fill="#dfe1e6"/></svg>
<div class="t lbl" style="left:210px;top:42.7px;">播放</div>
<svg class="ic" style="left:262px;top:14px" width="23" height="21" viewBox="0 0 23 21"><path d="M.5.5H22.5V18.5H13.5L11.5 20.5 9.5 18.5H.5zM11.5 .5V18.5"/></svg>
<div class="t lbl" style="left:250px;top:42.7px;">阅读模式</div>
<div class="a" style="left:314px;top:10px;width:75px;height:22px;border:1px solid #dcdfe4;border-radius:3px;background:#fff"></div>
<div class="t lbl" style="left:323px;top:16px;font-size:12.5px">159.1%</div>
<svg class="ic" style="left:374px;top:18px" width="9" height="6"><path d="M.5.5l4 4 4-4" stroke="#6b7180"/></svg>
<svg class="ic" style="left:399px;top:14.5px" width="16" height="16" viewBox="0 0 16 16"><circle cx="6" cy="6" r="5.5"/><path d="M10 10l5 5 M3 6h6"/></svg>
<svg class="ic" style="left:424px;top:14.5px" width="16" height="16" viewBox="0 0 16 16"><circle cx="6" cy="6" r="5.5"/><path d="M10 10l5 5 M3 6h6 M6 3v6"/></svg>
<svg class="ic" style="left:318px;top:40.5px" width="15" height="14" viewBox="0 0 15 14"><rect x=".5" y=".5" width="14" height="12.5"/></svg>
<div class="t lbl" style="left:320px;top:43.5px;font-size:8px;font-weight:bold;letter-spacing:-.3px">1:1</div>
<svg class="ic" style="left:344px;top:40px" width="15" height="15" viewBox="0 0 15 15"><path d="M2.8 2.5h6l3 3V12h-9z"/><path d="M.5 3V.5H3M11.5 .5h2.5V3M.5 12v2.5H3M11.5 14.5h2.5V12"/></svg>
<svg class="ic" style="left:368px;top:40px" width="15" height="15" viewBox="0 0 15 15"><path d="M1.5 10V.5h8.5l3.5 3.5v6M.5 12.5h14M2.5 10.5l-2 2 2 2M12.5 10.5l2 2-2 2"/></svg>
<svg class="ic" style="left:394.2px;top:39.4px" width="15" height="15" viewBox="0 0 15 15"><path d="M1.47 10.85A6.9 6.9 0 0 1 7.5 .6"/><path d="M7.5 .6A6.9 6.9 0 0 1 10.4 13.75" stroke-dasharray="2.4 2.2"/><path d="M-.8 8.6L1.5 11.3 3.8 8.6"/></svg>
<svg class="ic" style="left:418.1px;top:39.4px" width="15" height="15" viewBox="0 0 15 15"><path d="M13.53 10.85A6.9 6.9 0 0 0 7.5 .6"/><path d="M7.5 .6A6.9 6.9 0 0 0 4.6 13.75" stroke-dasharray="2.4 2.2"/><path d="M15.8 8.6L13.5 11.3 11.2 8.6"/></svg>
<svg class="ic" style="left:465px;top:11px" width="24" height="24" viewBox="0 0 24 24"><path d="M6.5 17.5H1.5V3.5H9l3 3V11"/><path d="M7.5 11.5h15v8l-3 3h-12z" fill="#fff"/><path d="M13 2.5c4-2 8 0 8.5 5M23.5 5l-2 2.8-2.8-2"/></svg>
<div class="t lbl" style="left:452px;top:42.7px;">旋转文档</div>
<svg class="ic" style="left:525px;top:15px" width="8" height="12"><path d="M7 .5L1 6l6 5.5"/></svg>
<svg class="ic" style="left:692px;top:15px" width="8" height="12"><path d="M1 .5L7 6l-6 5.5"/></svg>
<div class="a" style="left:545px;top:10px;width:135px;height:22px;border:1px solid #dcdfe4;border-radius:3px;background:#fff"></div>
<div class="t lbl" style="left:597px;top:14.5px;font-size:14.5px">2/21</div>
<div class="hl" style="left:517px;top:35px;width:52px;height:24px"></div>
<svg class="ic" style="left:523px;top:40px" width="12" height="15" viewBox="0 0 12 15"><path d="M.5 2.5a2 2 0 0 1 2-2h6l3 3v9a2 2 0 0 1-2 2h-7a2 2 0 0 1-2-2zM3.5 6.5h5M3.5 9.5h3"/></svg>
<div class="t lbl" style="left:540px;top:42.7px;">单页</div>
<svg class="ic" style="left:574px;top:40px" width="16" height="15" viewBox="0 0 16 15"><path d="M.5 2.5a2 2 0 0 1 2-2h2l2 2v10a2 2 0 0 1-2 2h-2a2 2 0 0 1-2-2zM9.5 2.5a2 2 0 0 1 2-2h2l2 2v10a2 2 0 0 1-2 2h-2a2 2 0 0 1-2-2zM2.5 5.5h2M2.5 8.5h2M11.5 5.5h2M11.5 8.5h2"/></svg>
<div class="t lbl" style="left:594px;top:42.7px;">双页</div>
<svg style="left:621px;top:46px" width="6" height="4"><path d="M0 0h6L3 3.5z" fill="#8a8f9c"/></svg>
<div class="hl" style="left:632px;top:35px;width:76px;height:24px"></div>
<svg class="ic" style="left:637px;top:40px" width="15" height="15" viewBox="0 0 15 15"><path d="M.5 0v4.5h14V0M.5 15V7.5h14V15"/></svg>
<div class="t lbl" style="left:656px;top:42.7px;">连续阅读</div>
<svg class="ic" style="left:735px;top:12px" width="22" height="22" viewBox="0 0 22 22"><rect x=".5" y=".5" width="12" height="21" rx="1.5"/><path d="M4 4.5l2.5-2 2.5 2M4 17.5l2.5 2 2.5-2M3.5 8.5h6M3.5 11h6M3.5 13.5h6M18 1.5v19M15.5 4L18 1.5 20.5 4M15.5 18l2.5 2.5 2.5-2.5"/></svg>
<div class="t lbl" style="left:717px;top:42.7px;">自动滚动</div>
<svg style="left:768px;top:46px" width="6" height="4"><path d="M0 0h6L3 3.5z" fill="#8a8f9c"/></svg>
<svg class="ic" style="left:799px;top:12px" width="26" height="23" viewBox="0 0 26 23"><path d="M1.2 14.5C4.5 9 8.5 7.3 12.5 7.3S20.5 9 23.8 14.5C20.5 20 16.5 21.7 12.5 21.7S4.5 20 1.2 14.5z"/><circle cx="12.5" cy="14.5" r="4.2" fill="#e4e6ea"/><path d="M12.5 .3v3.3M1.8 4l2.2 2.3M23.2 4l-2.2 2.3"/></svg>
<div class="t lbl" style="left:796px;top:42.7px;">背景</div>
<svg style="left:822.5px;top:46px" width="6" height="4"><path d="M0 0h6L3 3.5z" fill="#8a8f9c"/></svg>
<svg class="ic" style="left:843px;top:13px" width="17" height="17" viewBox="0 0 17 17"><path d="M1.5 2.2c1-1.2 4.2-1.3 4.2 1v4.3M5.7 4.7c-2-.4-4.5-.1-4.5 1.5s3.5 1.7 4.5-.3"/><path d="M15.7 6.5c0-3-1.5-4.5-4.7-4.5M13.3 -.2l-2.3 2.2 2.3 2.2"/><rect x="8.5" y="10" width="6.5" height="3.7"/><path d="M11.75 8.3v7.2"/><path d="M1 9.5c0 3 1 4.3 4.5 4.3h1M5 12l1.8 1.8L5 15.6"/></svg>
<div class="t lbl" style="left:863px;top:15.5px;">划词翻译</div>
<svg style="left:915px;top:20px" width="6" height="4"><path d="M0 0h6L3 3.5z" fill="#8a8f9c"/></svg>
<svg class="ic" style="left:843px;top:38.7px" width="17" height="17" viewBox="0 0 17 17"><path d="M8.2 .5L.5 2.3V14.3L8.2 16.1z"/><path d="M8.2 2.3H15.8V14.3H8.2"/><path d="M2.7 6.7c.7-.9 2.9-.9 2.9.7v3M5.6 8.5c-1.4-.3-3.1-.1-3.1 1s2.4 1.2 3.1-.2" stroke-width=".9"/><rect x="10" y="6.8" width="4.2" height="3" stroke-width=".9"/><path d="M12.1 5.3v6.2" stroke-width=".9"/></svg>
<div class="t lbl" style="left:863px;top:42.7px;">全文翻译</div>
<svg class="ic" style="left:933.3px;top:14.2px" width="24" height="20" viewBox="0 0 24 20"><path d="M2.2 .5H20.8C18.3 6 18.3 13.5 20.8 19H2.2C4.7 13.5 4.7 6 2.2 .5z"/><path d="M.7 4.5C2.2 8 2.2 12 .7 15.5M22.3 4.5C20.8 8 20.8 12 22.3 15.5M8.5 4.8h6.5M9.3 7.3h4"/></svg>
<div class="t lbl" style="left:933px;top:42.7px;">压缩</div>
<svg class="ic" style="left:989px;top:14.3px" width="25" height="21" viewBox="0 0 25 21"><path d="M3.5 2.5h8.5v15H3.5z" fill="#e4e6ea" stroke="none"/><path d="M.5 3.5V.5H3.5M20.5 .5h3.5V3.5M.5 16.5v3.5H3.5M20.5 20h3.5V16.5"/><rect x="3.5" y="2.5" width="18" height="15"/><circle cx="17.3" cy="6.5" r="1.5"/><path d="M3.5 13.5l4.8-5.5 3.7 4 9.5 5M12 -1v22"/></svg>
<div class="t lbl" style="left:971px;top:42.7px;">截图和对比</div>
<svg class="ic" style="left:1045px;top:12px" width="26" height="24" viewBox="0 0 26 24"><path d="M.5 23L8.8 3.5 17 23M3.3 16.5H14.3"/><path d="M14.03 6.1A3 3 0 0 1 14.03 10.7M16.09 3.65A6.2 6.2 0 0 1 16.09 13.15M18.2 1.12A9.5 9.5 0 0 1 18.2 15.68"/></svg>
<div class="t lbl" style="left:1045px;top:42.7px;">朗读</div>
<svg class="ic" style="left:1084px;top:12.8px" width="24" height="23" viewBox="0 0 24 23"><circle cx="9.2" cy="9.5" r="8.8" fill="#f3f4f6"/><path d="M15.6 15.6l6.3 5.9"/></svg>
<div class="t lbl" style="left:1083px;top:42.7px;">查找</div>
<div id="st" class="a"></div>
<div class="t lbl" style="left:-8.5px;top:909px;font-size:12px">氚</div>
<div class="a" style="left:17px;top:908px;width:1px;height:14px;background:#e1e3e8"></div>
<div class="a" style="left:264px;top:908px;width:1px;height:14px;background:#e1e3e8"></div>
<svg style="left:35px;top:909px" width="11" height="12"><path d="M1 0v12M10 .5L4 6l6 5.5" stroke="#2d3446" stroke-width="1.1" fill="none"/></svg>
<svg style="left:60px;top:909px" width="8" height="12"><path d="M7 .5L1 6l6 5.5" stroke="#2d3446" stroke-width="1.1" fill="none"/></svg>
<svg style="left:214px;top:909px" width="8" height="12"><path d="M1 .5L7 6l-6 5.5" stroke="#2d3446" stroke-width="1.1" fill="none"/></svg>
<svg style="left:236px;top:909px" width="11" height="12"><path d="M10 0v12M1 .5L7 6l-6 5.5" stroke="#2d3446" stroke-width="1.1" fill="none"/></svg>
<div class="a" style="left:86px;top:904px;width:110px;height:20.5px;border:1px solid #d8dbe0;border-radius:3px;background:#fff"></div>
<div class="t lbl" style="left:126px;top:907.5px;font-size:15.5px">2/21</div>
<svg style="left:280px;top:908px" width="14" height="15"><rect x=".5" y=".5" width="13" height="14" stroke="#9ea3ad" fill="none"/><path d="M10 7.5H4M6.5 5L4 7.5 6.5 10" stroke="#9ea3ad" fill="none"/></svg>
<svg style="left:304px;top:908px" width="14" height="15"><rect x=".5" y=".5" width="13" height="14" stroke="#9ea3ad" fill="none"/><path d="M4 7.5h6M7.5 5L10 7.5 7.5 10" stroke="#9ea3ad" fill="none"/></svg>
<div class="a" style="left:0;top:929px;width:726px;height:1px;background:#cfcfcf"></div>
<div id="ex" class="a" style="box-shadow:0 0 7px rgba(0,0,0,.28)"></div>
<svg style="left:755px;top:103px" width="13" height="16" viewBox="0 0 11 15"><path d="M0 0h8.5l2.5 1.5V15H0z" fill="#f5d06a"/><path d="M0 0h8.7v14.3H0z" fill="#fde59a"/><path d="M8.7 9.5h2.3V15H8.7z" fill="#e3b341"/><path d="M0 14.3h8.7V15H0z" fill="#f1cd68"/></svg>
<div class="a" style="left:776px;top:105px;width:1px;height:12px;background:#9a9a9a"></div>
<svg style="left:788px;top:103px" width="13" height="16" viewBox="0 0 13 16"><path d="M.5.5h8.5l3.5 3.5v11.5H.5z" fill="#fff" stroke="#8c8c8c"/><path d="M3 8.5l2.5 3L10 5.5" stroke="#e8502a" stroke-width="1.6" fill="none"/></svg>
<svg style="left:810px;top:103px" width="13" height="16" viewBox="0 0 11 15"><path d="M0 0h8.5l2.5 1.5V15H0z" fill="#f5d06a"/><path d="M0 0h8.7v14.3H0z" fill="#fde59a"/><path d="M8.7 9.5h2.3V15H8.7z" fill="#e3b341"/><path d="M0 14.3h8.7V15H0z" fill="#f1cd68"/></svg>
<svg style="left:831px;top:109px" width="7" height="7"><path d="M0 0h7v1.3H0zM0 3h7L3.5 6.5z" fill="#222"/></svg>
<div class="a" style="left:846px;top:105px;width:1px;height:12px;background:#9a9a9a"></div>
<div class="t ex" style="left:854px;top:105.5px;font-size:13px;color:#8c8c8c">24mex</div>
<div class="a" style="left:745px;top:127px;width:56px;height:23px;background:#0c63b8"></div>
<div class="t ex" style="left:761px;top:132.5px;color:#fff">文件</div>
<div class="t ex" style="left:815px;top:132.5px;">主页</div>
<div class="t ex" style="left:868px;top:132.5px;">共享</div>
<div class="t ex" style="left:921px;top:132.5px;">查看</div>
<div class="a" style="left:745px;top:153px;width:440px;height:1px;background:#dadbdc"></div>
<svg style="left:758px;top:169px" width="13" height="11"><path d="M12.5 5.5H1M5.5 1L1 5.5 5.5 10" stroke="#6e6e6e" stroke-width="1.7" fill="none"/></svg>
<svg style="left:787px;top:169px" width="13" height="11"><path d="M.5 5.5H12M7.5 1L12 5.5 7.5 10" stroke="#6e6e6e" stroke-width="1.7" fill="none"/></svg>
<svg style="left:814px;top:172px" width="7" height="5"><path d="M.5.5L3.5 3.5 6.5.5" stroke="#8a8a8a" stroke-width="1.1" fill="none"/></svg>
<svg style="left:832px;top:168px" width="12" height="13"><path d="M6 12.5V1M1 6L6 1l5 5" stroke="#6e6e6e" stroke-width="1.7" fill="none"/></svg>
<div class="a" style="left:851px;top:159px;width:340px;height:31px;border:1px solid #d9d9d9;background:#fff"></div>
<svg style="left:856px;top:166px" width="13" height="16" viewBox="0 0 11 15"><path d="M0 0h8.5l2.5 1.5V15H0z" fill="#f5d06a"/><path d="M0 0h8.7v14.3H0z" fill="#fde59a"/><path d="M8.7 9.5h2.3V15H8.7z" fill="#e3b341"/><path d="M0 14.3h8.7V15H0z" fill="#f1cd68"/></svg>
<svg style="left:878.5px;top:171px" width="5" height="7"><path d="M.7.5L3.7 3.5.7 6.5" stroke="#6e6e6e" stroke-width="1.4" fill="none"/></svg>
<svg style="left:939px;top:171px" width="5" height="7"><path d="M.7.5L3.7 3.5.7 6.5" stroke="#6e6e6e" stroke-width="1.4" fill="none"/></svg>
<svg style="left:1036.5px;top:171px" width="5" height="7"><path d="M.7.5L3.7 3.5.7 6.5" stroke="#6e6e6e" stroke-width="1.4" fill="none"/></svg>
<div class="t ex" style="left:893px;top:168px;">此电脑</div>
<div class="t ex" style="left:954px;top:168px;">本地磁盘 <i>(D:)</i></div>
<div class="t ex" style="left:1051.5px;top:168px;font-size:12.5px"><i>BaiduNetdiskDownloads</i></div>
<div class="a" style="left:745px;top:199px;width:440px;height:1px;background:#d0d0d0"></div>
<div class="a" style="left:903px;top:200px;width:1px;height:292px;background:#f0f0f0"></div>
<svg style="left:1043px;top:200px" width="8" height="5"><path d="M.5 4.5L4 1l3.5 3.5" stroke="#6a6a6a" stroke-width="1" fill="none"/></svg>
<div class="t ex" style="left:922px;top:207.5px;color:#4c607a">名称</div>
<svg style="left:770px;top:221px" width="15" height="13" viewBox="0 0 15 13"><path d="M9 0l1.6 4.2 4.4.3-3.4 2.9 1.1 4.4L9 9.4l-3.7 2.4 1.1-4.4L3 4.5l4.4-.3z" fill="#2f8be0"/><path d="M0 5.5h3.5M.5 8h3.5M1.5 10.5h3" stroke="#2f8be0" stroke-width="1"/></svg>
<div class="t ex" style="left:790.5px;top:221.9px;">快速访问</div>
<svg style="left:768.5px;top:254.5px" width="17" height="10.5" viewBox="0 0 16 11" preserveAspectRatio="none"><path d="M3.5 10.5a3.2 3.2 0 0 1-.3-6.3A4.8 4.8 0 0 1 12 3.5a3.6 3.6 0 0 1 .8 7z" fill="#1a78d6"/><path d="M5 10.5a2.7 2.7 0 0 1 .5-5.3 3.8 3.8 0 0 1 7 .8 2.3 2.3 0 0 1 .3 4.5z" fill="#3a9cf0"/></svg>
<div class="t ex" style="left:790.5px;top:253.8px;"><i>OneDrive</i></div>
<svg style="left:769px;top:286px" width="16" height="11" viewBox="0 0 16 11"><path d="M3.5 10.5a3.3 3.3 0 0 1-.3-6.5A4.3 4.3 0 0 1 11 2.5a4 4 0 0 1 2 8z" fill="#2b7cf0"/><path d="M6 10.5c1-3 3-5 5-5a3 3 0 0 1 2 5z" fill="#7db8ff"/></svg>
<div class="t ex" style="left:790.5px;top:285.8px;"><i>WPS</i>网盘</div>
<svg style="left:769px;top:317px" width="16" height="15" viewBox="0 0 16 15"><rect x=".5" y=".5" width="15" height="10" fill="#55c0f5" stroke="#2f9bd8"/><path d="M5.5 12.5h5M3 14.2h10" stroke="#8a9bb0" stroke-width="1.2"/></svg>
<div class="t ex" style="left:790.5px;top:317.6px;">此电脑</div>
<svg style="left:777px;top:340px" width="16" height="16" viewBox="0 0 16 16"><path d="M8 0l8 2.5v10L8 16 0 12.5v-10z" fill="#34b4cf"/><path d="M8 5.5l8-3v10L8 16z" fill="#1b8aa6"/><path d="M8 0l8 2.5-8 3-8-3z" fill="#7fe0ee"/></svg>
<div class="t ex" style="left:798.3px;top:341.9px;"><i>3D </i>对象</div>
<svg style="left:778px;top:365px" width="14" height="15" viewBox="0 0 14 15"><rect width="14" height="15" fill="#444"/><rect x="3" y="1" width="8" height="6" fill="#4a70d0"/><rect x="3" y="8" width="8" height="6" fill="#3a5cc0"/><path d="M4 4h6M4 11h6" stroke="#e8a030" stroke-width="2"/><path d="M1.5 1v13M12.5 1v13" stroke="#ddd" stroke-width="1.2" stroke-dasharray="1.5 1.5"/></svg>
<div class="t ex" style="left:798.3px;top:364.8px;">视频</div>
<svg style="left:777px;top:390px" width="16" height="12" viewBox="0 0 16 12"><rect x=".5" y=".5" width="15" height="11" fill="#fff" stroke="#9a9a9a"/><rect x="2" y="2" width="12" height="8" fill="#c9e2f5"/><path d="M2 8c3-3 6-1 12 0v2H2z" fill="#5a86a8"/><path d="M2 9c4-1 7 0 12 .5V10H2z" fill="#6a9a5a"/></svg>
<div class="t ex" style="left:798.3px;top:389.2px;">图片</div>
<svg style="left:779px;top:412px" width="13" height="16" viewBox="0 0 13 16"><path d="M.5.5h8l4 4v11H.5z" fill="#fff" stroke="#8c8c8c"/><path d="M3 4h4M3 6.5h7M3 9h7M3 11.5h7" stroke="#3a8ad8" stroke-width="1"/></svg>
<div class="t ex" style="left:798.3px;top:413.7px;">文档</div>
<svg style="left:777px;top:436px" width="16" height="16" viewBox="0 0 16 16"><path d="M5 0h6v8h5l-8 8-8-8h5z" fill="#2b8be6"/></svg>
<div class="t ex" style="left:798.3px;top:437px;">下载</div>
<svg style="left:779px;top:459.5px" width="12" height="17" viewBox="0 0 12 17"><path d="M5 0c1 3 6 4 6.5 8 .2 2-1 3-1.5 3.5.5-2.5-1.5-4.5-3.5-5v7.5a3.3 3 0 1 1-1.5-2.7z" fill="#1e90f0"/></svg>
<div class="t ex" style="left:798.3px;top:461.4px;">音乐</div>
<svg style="left:777px;top:485.5px" width="16" height="8"><rect width="16" height="8" fill="#1e7fd8"/></svg>
<div class="t ex" style="left:798.3px;top:484.6px;">桌面</div>
<div class="a" style="left:919px;top:442.5px;width:270px;height:21px;background:#d9d9d9"></div>
<svg style="left:925px;top:235.5px" width="11" height="15" viewBox="0 0 11 15"><path d="M0 0h8.5l2.5 1.5V15H0z" fill="#f5d06a"/><path d="M0 0h8.7v14.3H0z" fill="#fde59a"/><path d="M8.7 9.5h2.3V15H8.7z" fill="#e3b341"/><path d="M0 14.3h8.7V15H0z" fill="#f1cd68"/></svg>
<div class="t ex f" style="left:943.3px;top:237.1px;"><i>backend-</i>主交易后台前端系统<i>vue</i></div>
<svg style="left:925px;top:256.5px" width="11" height="15" viewBox="0 0 11 15"><path d="M0 0h8.5l2.5 1.5V15H0z" fill="#f5d06a"/><path d="M0 0h8.7v14.3H0z" fill="#fde59a"/><path d="M8.7 9.5h2.3V15H8.7z" fill="#e3b341"/><path d="M0 14.3h8.7V15H0z" fill="#f1cd68"/></svg>
<div class="t ex f" style="left:943.3px;top:258.1px;"><i>db-</i>数据库</div>
<svg style="left:925px;top:277.5px" width="11" height="15" viewBox="0 0 11 15"><path d="M0 0h8.5l2.5 1.5V15H0z" fill="#f5d06a"/><path d="M0 0h8.7v14.3H0z" fill="#fde59a"/><path d="M8.7 9.5h2.3V15H8.7z" fill="#e3b341"/><path d="M0 14.3h8.7V15H0z" fill="#f1cd68"/></svg>
<div class="t ex f" style="left:943.3px;top:279.1px;"><i>exdata-</i>行情接口服务<i>api</i></div>
<svg style="left:925px;top:298.5px" width="11" height="15" viewBox="0 0 11 15"><path d="M0 0h8.5l2.5 1.5V15H0z" fill="#f5d06a"/><path d="M0 0h8.7v14.3H0z" fill="#fde59a"/><path d="M8.7 9.5h2.3V15H8.7z" fill="#e3b341"/><path d="M0 14.3h8.7V15H0z" fill="#f1cd68"/></svg>
<div class="t ex f" style="left:943.3px;top:300.1px;"><i>ex-sms-</i>发送短信服务<i>api</i></div>
<svg style="left:925px;top:319.5px" width="11" height="15" viewBox="0 0 11 15"><path d="M0 0h8.5l2.5 1.5V15H0z" fill="#f5d06a"/><path d="M0 0h8.7v14.3H0z" fill="#fde59a"/><path d="M8.7 9.5h2.3V15H8.7z" fill="#e3b341"/><path d="M0 14.3h8.7V15H0z" fill="#f1cd68"/></svg>
<div class="t ex f" style="left:943.3px;top:321.1px;"><i>frontend-</i>主交易前端系统<i>vue</i></div>
<svg style="left:925px;top:340.5px" width="11" height="15" viewBox="0 0 11 15"><path d="M0 0h8.5l2.5 1.5V15H0z" fill="#f5d06a"/><path d="M0 0h8.7v14.3H0z" fill="#fde59a"/><path d="M8.7 9.5h2.3V15H8.7z" fill="#e3b341"/><path d="M0 14.3h8.7V15H0z" fill="#f1cd68"/></svg>
<div class="t ex f" style="left:943.3px;top:342.1px;"><i>mex-clear-</i>计划任务止盈止损服务<i>api</i></div>
<svg style="left:925px;top:361.5px" width="11" height="15" viewBox="0 0 11 15"><path d="M0 0h8.5l2.5 1.5V15H0z" fill="#f5d06a"/><path d="M0 0h8.7v14.3H0z" fill="#fde59a"/><path d="M8.7 9.5h2.3V15H8.7z" fill="#e3b341"/><path d="M0 14.3h8.7V15H0z" fill="#f1cd68"/></svg>
<div class="t ex f" style="left:943.3px;top:363.1px;"><i>mex-server-</i>后端服务<i>api</i></div>
<svg style="left:925px;top:382.5px" width="11" height="15" viewBox="0 0 11 15"><path d="M0 0h8.5l2.5 1.5V15H0z" fill="#f5d06a"/><path d="M0 0h8.7v14.3H0z" fill="#fde59a"/><path d="M8.7 9.5h2.3V15H8.7z" fill="#e3b341"/><path d="M0 14.3h8.7V15H0z" fill="#f1cd68"/></svg>
<div class="t ex f" style="left:943.3px;top:384.1px;"><i>MexWallet--</i>钱包服务</div>
<svg style="left:925px;top:403.5px" width="11" height="15" viewBox="0 0 11 15"><path d="M0 0h8.5l2.5 1.5V15H0z" fill="#f5d06a"/><path d="M0 0h8.7v14.3H0z" fill="#fde59a"/><path d="M8.7 9.5h2.3V15H8.7z" fill="#e3b341"/><path d="M0 14.3h8.7V15H0z" fill="#f1cd68"/></svg>
<div class="t ex f" style="left:943.3px;top:405.1px;"><i>upload-</i>文件上传服务<i>api</i></div>
<svg style="left:925px;top:424.5px" width="12" height="15" viewBox="0 0 12 15"><path d="M.5.5h7.5l3.5 3.5v10.5H.5z" fill="#fff" stroke="#8c8c8c"/><path d="M8 .5v3.5h3.5" fill="none" stroke="#8c8c8c"/></svg>
<div class="t ex f" style="left:943.3px;top:426.1px;"><i>README.MD</i></div>
<svg style="left:925px;top:445.5px" width="12" height="15" viewBox="0 0 12 15"><path d="M.5.5h7.5l3.5 3.5v10.5H.5z" fill="#fff" stroke="#8c8c8c"/><path d="M3 5h6M3 7.5h6M3 10h6M3 12.5h6" stroke="#9a9a9a" stroke-width=".8"/></svg>
<div class="t ex f" style="left:943.3px;top:447.1px;">部署流程</div>
<svg style="left:923px;top:466.5px" width="14" height="15" viewBox="0 0 14 15"><path d="M2.5.5h8l3 3v11h-11z" fill="#fff" stroke="#c03a2a"/><rect x="0" y="5" width="9" height="8" rx="1.5" fill="#e04a32"/><path d="M3 11V7.5h2.5a1.2 1.2 0 0 1 0 2.4H3.5" stroke="#fff" stroke-width="1" fill="none"/></svg>
<div class="t ex f" style="left:943.3px;top:468.1px;">后台配置功能说明</div>
<div class="a" style="left:745px;top:486px;width:440px;height:6px;background:linear-gradient(rgba(0,0,0,0),rgba(0,0,0,.22))"></div>
<div id="np" class="a"></div>
<svg style="left:735px;top:498.5px" width="15" height="16" viewBox="0 0 15 16"><g transform="skewX(-7) translate(2 0)"><path d="M2 2.5h11v12.5H2z" fill="#e8d9b8"/><path d="M1.5 2h11v12H1.5z" fill="#a9dbe8" stroke="#6fb0c6" stroke-width=".7"/><path d="M2.5 5h9M2.5 7h9M2.5 9h9M2.5 11h9" stroke="#7dc0d4" stroke-width=".7"/><path d="M2 1.3h10" stroke="#4a4a4a" stroke-width="1.5" stroke-dasharray=".9 .9"/></g></svg>
<div class="t ex" style="left:755px;top:500.5px;">部署流程<i style="letter-spacing:1.6px"> - </i>记事本</div>
<div class="t ex" style="left:733px;top:525.5px;">文件<span style="letter-spacing:-.4px">(<span class="u">F</span>)</span></div>
<div class="t ex" style="left:785px;top:525.5px;">编辑<span style="letter-spacing:-.4px">(<span class="u">E</span>)</span></div>
<div class="t ex" style="left:838px;top:525.5px;">格式<span style="letter-spacing:-.4px">(<span class="u">O</span>)</span></div>
<div class="t ex" style="left:893.5px;top:525.5px;">查看<span style="letter-spacing:-.4px">(<span class="u">V</span>)</span></div>
<div class="t ex" style="left:948.5px;top:525.5px;">帮助<span style="letter-spacing:-.4px">(<span class="u">H</span>)</span></div>
<div class="a" style="left:726px;top:540.5px;width:460px;height:1px;background:#e8e8e8"></div>
<div class="t np" style="left:729.7px;top:544.5px;">代码介绍</div>
<div class="t np" style="left:729.7px;top:565.5px;">移动端</div>
<div class="t np" style="left:729.7px;top:586.6px;"><i>PC </i>端</div>
<div class="t np" style="left:729.7px;top:607.6px;"><i>Api server</i></div>
<div class="t np" style="left:729.7px;top:628.7px;">订单结算中心</div>
<div class="t np" style="left:729.7px;top:649.8px;">行情中心</div>
<div class="t np" style="left:729.7px;top:670.8px;">网站后台</div>
<div class="t np" style="left:729.7px;top:691.9px;">代理商后台</div>
<div class="t np" style="left:729.7px;top:712.9px;">钱包</div>
<div class="t np" style="left:729.7px;top:734px;">安卓</div>
<div class="t np" style="left:729.7px;top:755px;"><i>iOS</i></div>
<div class="t np w" style="left:729.7px;top:776px;">前端代码技术栈：<i>Vue</i></div>
<div class="t np w" style="left:729.7px;top:818.2px;">后端代码技术栈：<i>NodeJS+MongoDB+Redis</i></div>
<div class="t np w" style="left:729.7px;top:860.2px;"><i>iOS</i>、安卓非原生<i>App</i>，使用的是<i> WebView </i>混合<i> App</i></div>
<div class="t np w" style="left:729.7px;top:902.4px;">服务器</div>
<div class="t np w" style="left:729.7px;top:923.4px;"><i>Linux</i></div>
<div class="a" style="left:729px;top:543px;width:1px;height:19px;background:#000"></div>
</body>
</html>
